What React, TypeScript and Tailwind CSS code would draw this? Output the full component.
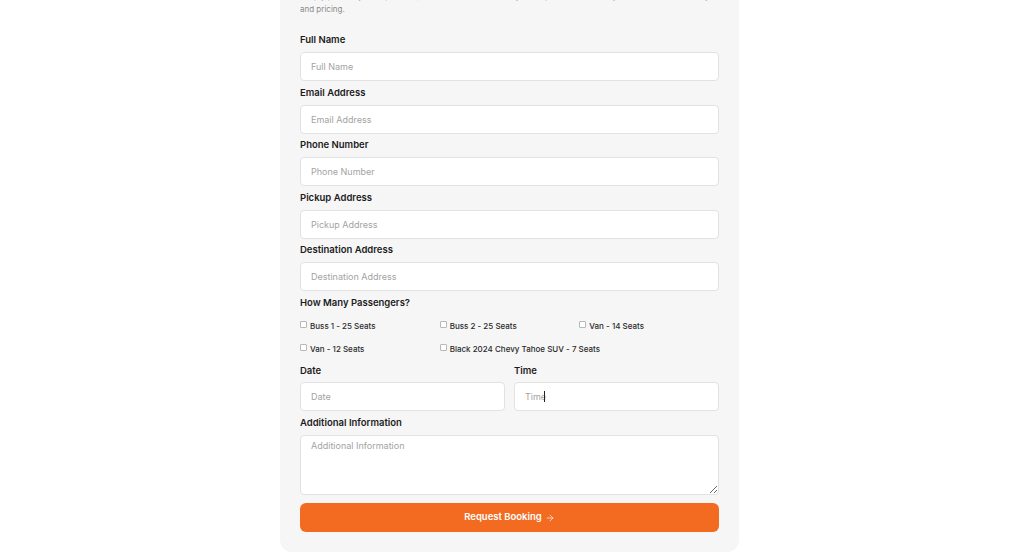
import { ArrowRight } from 'lucide-react';

const fields = ['Full Name', 'Email Address', 'Phone Number', 'Pickup Address', 'Destination Address'];

const seats = [
    'Buss 1 - 25 Seats',
    'Buss 2 - 25 Seats',
    'Van - 14 Seats',
    'Van - 12 Seats',
    'Black 2024 Chevy Tahoe SUV - 7 Seats',
];

const labelCls = 'block text-[9.5px] leading-[12px] font-semibold text-[#1c1c1c] mb-[6px]';
const inputCls =
    'w-full h-[29px] rounded-[4px] border border-[#e2e2e2] bg-white px-[10px] text-[9px] text-[#333] placeholder:text-[#a3a3a3] outline-none';

export default function App() {
    return (
        <div className="min-h-screen bg-white flex justify-center pr-[5px] overflow-hidden" style={{ fontFamily: 'Inter, "Noto Sans", sans-serif' }}>
            <div className="w-[459px] -mt-[30px] self-start bg-[#f6f6f6] rounded-b-[12px] px-5 pt-[20px] pb-[20px]">
                <p className="text-[8px] leading-[13px] text-[#8a8a8a] whitespace-nowrap">
                    Simply provide your trip details, and our team will review your request and contact you to confirm availability
                    <br />
                    and pricing.
                </p>

                <form className="mt-[18px] flex flex-col">
                    {/* Text inputs */}
                    <div className="flex flex-col gap-[5.5px]">
                        {fields.map((f) => (
                            <div key={f}>
                                <label className={labelCls}>{f}</label>
                                <input className={inputCls} placeholder={f} />
                            </div>
                        ))}
                    </div>

                    {/* Passengers */}
                    <div className="mt-[6px]">
                        <label className={labelCls}>How Many Passengers?</label>
                        <div className="grid grid-cols-3 gap-y-[11px] pt-[5px]">
                            {seats.map((s) => (
                                <label key={s} className="flex items-center gap-[2px] h-[12px] whitespace-nowrap text-[8px] font-medium text-[#2a2a2a]">
                                    <input
                                        type="checkbox"
                                        className="appearance-none shrink-0 w-[7px] h-[7px] border border-[#b8b8b8] bg-white rounded-[1px] -mt-[3px] mr-[1px]"
                                    />
                                    {s}
                                </label>
                            ))}
                        </div>
                    </div>

                    {/* Date / Time */}
                    <div className="grid grid-cols-2 gap-[9px] mt-[10px]">
                        <div>
                            <label className="block text-[9.5px] leading-[12px] font-semibold text-[#1c1c1c] mb-[5px]">Date</label>
                            <input className={inputCls} placeholder="Date" />
                        </div>
                        <div>
                            <label className="block text-[9.5px] leading-[12px] font-semibold text-[#1c1c1c] mb-[5px]">Time</label>
                            <div className="relative">
                                <input className={inputCls} placeholder="Time" />
                                <span className="absolute left-[30px] top-[9px] w-px h-[11px] bg-[#222]" />
                            </div>
                        </div>
                    </div>

                    <div className="mt-[6px]">
                        <label className={labelCls}>Additional Information</label>
                        <textarea
                            className="block w-full h-[60px] rounded-[4px] border border-[#e2e2e2] bg-white px-[10px] py-[3px] text-[9px] placeholder:text-[#a3a3a3] outline-none"
                            placeholder="Additional Information"
                        />
                    </div>

                    <button
                        type="button"
                        className="mt-[8px] h-[29px] w-full rounded-[6px] bg-[#f26b21] text-white text-[9.5px] font-semibold flex items-center justify-center gap-[3px]"
                    >
                        Request Booking
                        <ArrowRight className="w-[10px] h-[10px]" strokeWidth={1.6} />
                    </button>
                </form>
            </div>
        </div>
    );
}
